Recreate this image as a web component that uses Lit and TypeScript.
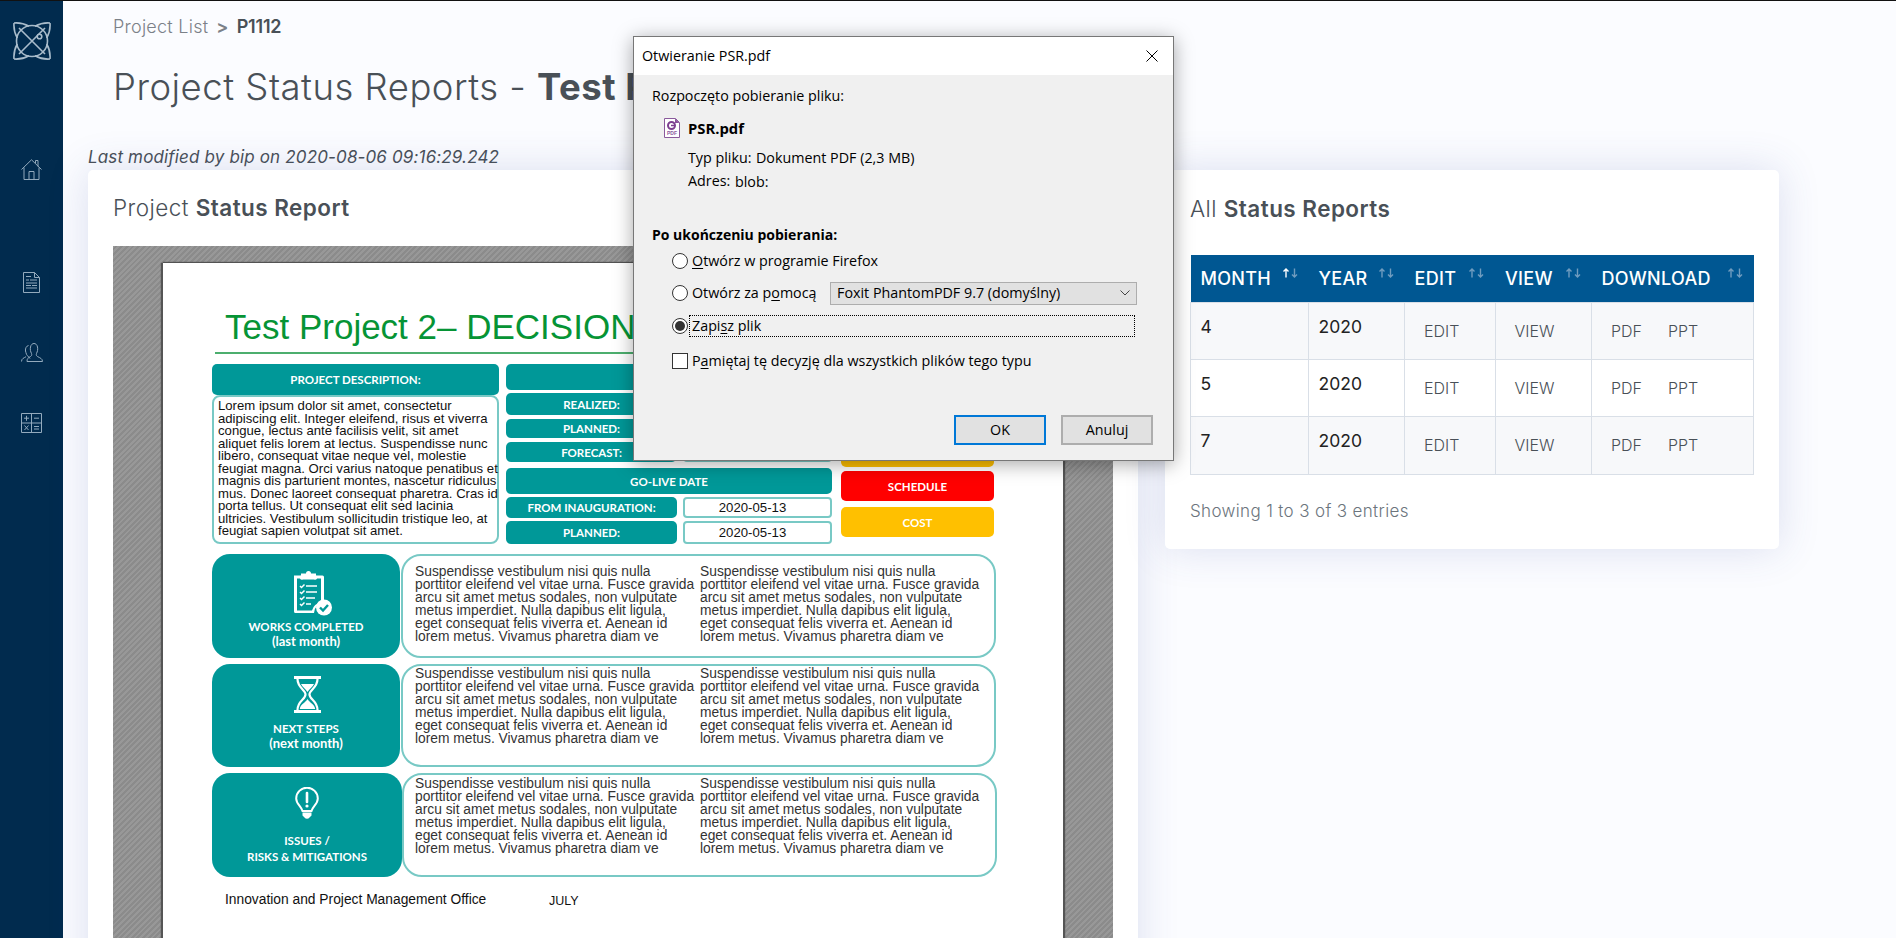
import { LitElement, html, css, svg } from "lit";
import { customElement } from "lit/decorators.js";

const LOREM = [
  "Lorem ipsum dolor sit amet, consectetur",
  "adipiscing elit. Integer eleifend, risus et viverra",
  "congue, lectus ante facilisis velit, sit amet",
  "aliquet felis lorem at lectus. Suspendisse nunc",
  "libero, consequat vitae neque vel, molestie",
  "feugiat magna. Orci varius natoque penatibus et",
  "magnis dis parturient montes, nascetur ridiculus",
  "mus. Donec laoreet consequat pharetra. Cras id",
  "porta tellus. Ut consequat elit sed lacinia",
  "ultricies. Vestibulum sollicitudin tristique leo, at",
  "feugiat sapien volutpat sit amet.",
];
const SUSP = [
  "Suspendisse vestibulum nisi quis nulla",
  "porttitor eleifend vel vitae urna. Fusce gravida",
  "arcu sit amet metus sodales, non vulputate",
  "metus imperdiet. Nulla dapibus elit ligula,",
  "eget consequat felis viverra et. Aenean id",
  "lorem metus. Vivamus pharetra diam ve",
];

const clipboard = svg`<svg class="ic-clip" viewBox="0 0 39 47" fill="none">
  <path d="M1 6.500h28.500a1.500 1.500 0 0 1 1.500 1.500v26a10 10 0 0 0-10 10H2.500A1.500 1.500 0 0 1 1 42.500z" fill="#fff"/>
  <path d="M4 9.500h24v24a11 11 0 0 0-9 8H4z" fill="#009898"/>
  <path d="M8 6.500v-2h5a2.500 2.500 0 0 1 5 0h5v2a2 2 0 0 1-2 4h-11a2 2 0 0 1-2-4z" fill="#fff"/>
  <g stroke="#fff" stroke-width="1.500">
    <path d="M7 17l1.500 1.500 3-3M7 23l1.500 1.500 3-3M7 29l1.500 1.500 3-3M7 35l1.500 1.500 3-3" />
    <path d="M13 17h11M13 23h11M13 29h9M13 35h5" stroke-width="1.700"/>
  </g>
  <circle cx="31" cy="38.500" r="8" fill="#fff"/>
  <path d="M27 38.500l3 3 5-5.500" stroke="#009898" stroke-width="2.400"/>
</svg>`;

const hourglass = svg`<svg class="ic-hour" viewBox="0 0 27 37" fill="none">
  <path d="M0 0h27v3H0zM0 34h27v3H0z" fill="#fff"/>
  <path d="M3.500 3c0 9 8 10.500 8 15.500S3.500 25 3.500 34M23.500 3c0 9-8 10.500-8 15.500s8 6.500 8 15.500" stroke="#fff" stroke-width="2.200"/>
  <path d="M7 8h13c-1 3-5 5-6.500 8C12 13 8 11 7 8zM5.800 33c.6-5 6-6.500 7.700-10 1.700 3.500 7 5 7.700 10z" fill="#fff"/>
</svg>`;

const bulb = svg`<svg class="ic-bulb" viewBox="0 0 24 33" fill="none">
  <path d="M7.500 24C6 19 1.200 17 1.200 11.500a10.800 10.800 0 0 1 21.600 0C22.800 17 18 19 16.500 24z" stroke="#fff" stroke-width="2"/>
  <path d="M7.500 25.500h9v3l-2 2a3 3 0 0 1-5 0l-2-2z" fill="#fff"/>
  <path d="M12 6v9" stroke="#fff" stroke-width="2.600" stroke-linecap="round"/>
  <circle cx="12" cy="19" r="1.600" fill="#fff"/>
</svg>`;

const logo = svg`<svg class="logo" viewBox="0 0 38 38" fill="none" stroke="#a9bccb" stroke-width="1.600">
  <circle cx="19" cy="19" r="15.500"/>
  <path d="M6 6l26 26M32 6L6 32"/>
  <path d="M1 1c6-.5 11 1 15 3.300M1 1c-.5 6 1 11 3.300 15"/>
  <path d="M37 1c-6-.5-11 1-15 3.300M37 1c.5 6-1 11-3.300 15"/>
  <path d="M1 37c6 .5 11-1 15-3.300M1 37c-.5-6 1-11 3.300-15"/>
  <path d="M37 37c-6 .5-11-1-15-3.300M37 37c.5-6-1-11-3.300-15"/>
  <circle cx="26.500" cy="14.500" r="2.300" fill="#012b4e"/>
</svg>`;

const home = svg`<svg class="nav h21" viewBox="0 0 21 21" fill="none"><path d="M.5 10.500L10.500.8l10 9.700M3 8.500v12h15v-12M8 20.500v-8h5v8M14.500 4V1.500h2.500v6" /></svg>`;
const doc = svg`<svg class="nav w17" viewBox="0 0 17 21" fill="none"><path d="M.5.500h11l5 5v15H.5zM11.500.500v5h5M3 4.500h5M3 8h3M7 8h7M3 11h11M3 13.500h5M9 13.500h5M3 16h11"/></svg>`;
const users = svg`<svg class="nav h19" viewBox="0 0 22 19" fill="none"><path d="M9 15.500c-.8-2-3-2.200-3.500-4.200C5 10 4.800 9 4.500 8c-.3-3 1-5 3-5.500M.5 18.500c0-3 2.500-3.500 4.500-4.800M6 18.500h15.500c0-3-2.500-3.500-5-5-1.200-.8-1.500-1.500-1-3 1-2 1.500-4 1-6.500C16 1.500 14.500.5 13 .5S10 1.500 9.500 4c-.5 2.500 0 4.500 1 6.500.5 1.500.2 2.200-1 3-2.500 1.500-3.500 2-3.500 5z"/></svg>`;
const calc = svg`<svg class="nav h20" viewBox="0 0 21 20" fill="none"><path d="M.5.500h20v19H.5zM10.500.500v19M.5 10h20M3 5.200h5M5.500 2.800v5M13 5.200h5M3.500 12.500l4 4.500M7.500 12.500l-4 4.500M13 13.500h5M13 16h5"/></svg>`;

const fileIcon = svg`<svg class="fileic" viewBox="0 0 16 20" fill="none">
  <path d="M.5.500h11l4 4v15H.5z" fill="#fff" stroke="#8a5a9c"/>
  <path d="M11 .500l4.500 4.500H11z" fill="#8a4f9b"/>
  <circle cx="7.500" cy="7.500" r="3.500" stroke="#7d3f90" stroke-width="2"/>
  <path d="M7 7.500h4" stroke="#7d3f90" stroke-width="1.500"/>
  <text x="3" y="17" font-size="5" font-family="Liberation Sans" fill="#8a5a9c">PDF</text>
</svg>`;

const arrows = (active = false) => svg`<svg class="sort" viewBox="0 0 17 10" fill="none" stroke-width="1.400">
  <path d="M4 9.500V1M1.500 3.500L4 1l2.500 2.500" stroke=${active ? "#ffffff" : "#6f9cbf"}/>
  <path d="M12.500 .500V9M10 6.500L12.500 9 15 6.500" stroke="#6f9cbf"/>
</svg>`;

@customElement("app-root")
export class AppRoot extends LitElement {
  static styles = css`
    :host {
      display: flex;
      height: 938px;
      overflow: hidden;
      position: relative;
      box-sizing: border-box;
      border-top: 1px solid #111;
      background: #fbfcff;
      font-family: Inter, "Liberation Sans", sans-serif;
      color: #495057;
    }
    * { box-sizing: border-box; }

    .side {
      width: 63px;
      flex: none;
      background: #012b4e;
      display: flex;
      flex-direction: column;
      align-items: center;
      padding-top: 21px;
    }
    .logo { width: 38px; height: 38px; }
    .nav { stroke: #93aabd; stroke-width: 1; display: block; }
    .h21 { width: 21px; height: 21px; margin-top: 99px; }
    .w17 { width: 17px; height: 21px; margin-top: 92px; }
    .h19 { width: 22px; height: 19px; margin-top: 50px; }
    .h20 { width: 21px; height: 20px; margin-top: 51px; }

    .main { flex: 1; min-width: 0; padding: 14px 0 0 25px; }
    .crumbs {
      margin-left: 25px;
      line-height: 24px;
      font-size: 18px;
      font-weight: 300;
      color: #7b8188;
      display: flex;
      gap: 8px;
      letter-spacing: 0.25px;
    }
    .crumbs b { font-weight: 600; color: #495057; letter-spacing: -0.2px; }
    .crumbs i { font-style: normal; font-weight: 600; }
    h1 {
      margin: 26px 0 0 25px;
      font-size: 36.500px;
      line-height: 44px;
      font-weight: 300;
      letter-spacing: 0.5px;
      white-space: nowrap;
      color: #495057;
    }
    h1 b { font-weight: 700; }
    .mod {
      margin-top: 38px;
      font-size: 17px;
      line-height: 20px;
      font-style: italic;
      font-weight: 400;
      letter-spacing: 0.15px;
      color: #495057;
    }
    .cols { display: grid; grid-template-columns: 1050px 614px; gap: 27px; margin-top: 3px; align-items: start; }
    .card {
      background: #fff;
      border-radius: 5px;
      box-shadow: 0 0 40px rgba(62, 80, 160, 0.17);
      padding: 0 25px;
    }
    .c1 { padding-top: 24px; height: 1100px; }
    .c2 { padding-top: 25px; padding-bottom: 26px; }
    h2 {
      margin: 0;
      font-size: 22.500px;
      line-height: 28px;
      font-weight: 300;
      letter-spacing: 0.45px;
      color: #495057;
    }
    h2 b { font-weight: 600; }

    .viewer {
      margin-top: 24px;
      height: 900px;
      padding: 17px 50px 0;
      background: repeating-linear-gradient(-45deg, #8b8b8b 0 2px, #989898 2px 4px);
    }
    .page {
      height: 860px;
      background: #fff;
      box-shadow: -2px 0 1px #555, 2px 0 1px #555, 0 -1px 1px #555;
      padding: 42px 0 0 49px;
      font-family: "Liberation Sans", Arial, sans-serif;
      color: #222;
    }
    .ptitle {
      margin-left: 13px;
      font-size: 35px;
      line-height: 44px;
      color: #069435;
      white-space: nowrap;
    }
    .prule { margin: 3px 0 10px 3px; height: 2px; width: 780px; background: #4cae6e; }
    .top { display: grid; grid-template-columns: 287px 326px 153px; column-gap: 7px; }
    .top > :last-child { margin-left: 2px; }
    .lab {
      background: #009898;
      color: #fff;
      border-radius: 5px;
      font-family: Lato, "Open Sans", sans-serif;
      font-weight: 700;
      font-size: 11.500px;
      display: flex;
      align-items: center;
      justify-content: center;
      white-space: nowrap;
    }
    .l-desc { height: 31px; }
    .dbox {
      height: 149px;
      border: 2px solid #78c9c5;
      border-radius: 8px;
      padding: 3px 0 0 4px;
      font-size: 13.150px;
      line-height: 12.500px;
      color: #111;
      white-space: nowrap;
    }
    .mid { display: flex; flex-direction: column; }
    .pair { display: grid; grid-template-columns: 171px 149px; column-gap: 6px; }
    .val {
      border: 2px solid #78c9c5;
      border-radius: 4px;
      background: #fff;
      font-size: 13.200px;
      padding-right: 10px;
      color: #111;
      display: flex;
      align-items: center;
      justify-content: center;
    }
    .m1 { height: 26px; }
    .m2 { height: 22px; margin-top: 3px; }
    .m3 { height: 19px; margin-top: 4px; }
    .m4 { height: 20px; margin-top: 4px; }
    .m5 { height: 26px; margin-top: 6px; }
    .m6 { height: 21px; margin-top: 3px; }
    .m7 { height: 23px; margin-top: 3px; }
    .rag { display: flex; flex-direction: column; padding-top: 73px; }
    .rag .lab { width: 153px; height: 30px; }
    .y { background: #ffc000; }
    .r { background: #ff0000; margin-top: 4px; }
    .y2 { background: #ffc000; margin-top: 6px; }

    .rows { margin-top: 10px; display: flex; flex-direction: column; gap: 6px; width: 785px; }
    .row { display: grid; grid-template-columns: 188px 595px; column-gap: 1px; height: 104px; }
    .row.b { height: 103px; }
    .row.c { grid-template-columns: 190px 595px; column-gap: 0; }
    .tile {
      background: #009898;
      color: #fff;
      border-radius: 18px;
      display: flex;
      flex-direction: column;
      align-items: center;
      font-family: Lato, "Open Sans", sans-serif;
      font-weight: 700;
      font-size: 11.500px;
      line-height: 14px;
      text-align: center;
    }
    .tile svg { display: block; }
    .sub { font-size: 13px; }
    .ic-clip { width: 39px; height: 47px; margin: 15px 0 4px 13px; }
    .ic-hour { width: 27px; height: 37px; margin: 12px 0 9px 2px; }
    .ic-bulb { width: 24px; height: 33px; margin: 14px 0 14px; }
    .row.c .tile span + span { margin-top: 2px; }
    .txtbox {
      border: 2px solid #78c9c5;
      border-radius: 20px;
      display: grid;
      grid-template-columns: 285px 285px;
      padding-left: 12px;
      font-size: 13.800px;
      line-height: 13px;
      color: #333;
      white-space: nowrap;
    }
    .row.a .txtbox { padding-top: 9px; }
    .row.b .txtbox { padding-top: 1px; }
    .row.c .txtbox { padding-top: 2px; }
    .row.c .txtbox { padding-left: 11px; }
    .foot {
      margin: 15px 0 0 13px;
      display: flex;
      align-items: flex-end;
      color: #111;
    }
    .foot span:first-child { font-size: 13.800px; width: 324px; line-height: 16px; }
    .foot span:last-child { font-size: 12.500px; line-height: 13px; }

    table { border-collapse: collapse; table-layout: fixed; width: 563px; margin-top: 32px; }
    th {
      background: #005792;
      color: #fff;
      height: 47px;
      padding: 0 10px 0 10px;
      font-size: 18px;
      font-weight: 500;
      letter-spacing: 0.3px;
      text-align: left;
    }
    th div { display: flex; justify-content: space-between; align-items: center; }
    .sort { width: 17px; height: 10px; flex: none; margin-top: -11px; }
    td {
      border: 1px solid #d9dfe7;
      vertical-align: top;
      padding: 13.500px 0 0 9.500px;
      font-size: 17.500px;
      line-height: 22px;
      color: #222;
      font-weight: 400;
    }
    tr:nth-child(odd) td { background: #f7f8fa; }
    tr.r57 { height: 57px; }
    tr.r58 { height: 58px; }
    td.lk { padding: 17.500px 0 0 19px; font-size: 16px; font-weight: 300; color: #495057; }
    td.lk span { display: inline-block; min-width: 57px; }
    .show { margin-top: 24px; line-height: 24px; font-size: 17px; letter-spacing: 0.35px; font-weight: 300; color: #6c757d; }

    .dlg {
      position: absolute;
      left: 633px;
      top: 35px;
      width: 541px;
      height: 425px;
      background: #f0f0f0;
      border: 1px solid #777;
      box-shadow: 0 3px 18px rgba(0, 0, 0, 0.35);
      font-family: "Open Sans", "Noto Sans", sans-serif;
      font-size: 14.300px;
      color: #000;
      line-height: 20px;
    }
    .tb {
      height: 38px;
      background: #fff;
      display: flex;
      align-items: center;
      justify-content: space-between;
      padding: 0 15px 0 8px;
    }
    .tb svg { width: 12px; height: 12px; }
    .bd { padding: 11px 20px 0 18px; }
    .file { margin: 12px 0 0 12px; display: flex; gap: 8px; font-weight: 700; font-size: 14.800px; }
    .fileic { width: 16px; height: 20px; }
    .meta { margin-left: 36px; display: flex; }
    .meta1 { margin-top: 10px; }
    .meta2 { margin-top: 3px; }
    .meta1 span:first-child { width: 68px; }
    .meta2 span:first-child { width: 47px; }
    .meta2 span:last-child { padding-top: 1px; }
    .after { margin-top: 33px; font-weight: 700; font-size: 14px; }
    .opt { margin-left: 20px; height: 22px; display: flex; align-items: center; gap: 4px; }
    .o1 { margin-top: 5px; }
    .o2 { margin-top: 10px; }
    .o3 { margin-top: 11px; }
    .o4 { margin-top: 13px; }
    .radio {
      width: 16px;
      height: 16px;
      border-radius: 50%;
      border: 1px solid #333;
      background: #fff;
      flex: none;
      display: flex;
      align-items: center;
      justify-content: center;
    }
    .radio.on::after { content: ""; width: 10px; height: 10px; border-radius: 50%; background: #333; }
    .chk { width: 16px; height: 16px; border: 1px solid #333; background: #fff; flex: none; }
    .o2 .lbl { width: 134px; white-space: nowrap; }
    .sel {
      width: 307px;
      height: 23px;
      background: #e1e1e1;
      border: 1px solid #adadad;
      display: flex;
      align-items: center;
      justify-content: space-between;
      padding: 0 6px 0 6px;
    }
    .sel svg { width: 10px; height: 6px; }
    .focus { flex: 1; margin-left: -3px; height: 22px; border: 1px dotted #000; padding-left: 2px; margin-right: 18px; line-height: 20px; }
    .btns { margin-top: 43px; display: flex; justify-content: flex-end; gap: 15px; }
    .btn {
      width: 92px;
      height: 30px;
      background: #e1e1e1;
      border: 2px solid #adadad;
      display: flex;
      align-items: center;
      justify-content: center;
    }
    .btn.def { border-color: #0078d7; }
    u { text-underline-offset: 2px; text-decoration-thickness: 1px; }
  `;

  private txtCol() {
    return html`<div>${SUSP.map((l) => html`<div>${l}</div>`)}</div>`;
  }

  render() {
    const rows = [
      { cls: "a", icon: clipboard, l: ["WORKS COMPLETED", "(last month)"], sub: "sub" },
      { cls: "b", icon: hourglass, l: ["NEXT STEPS", "(next month)"], sub: "sub" },
      { cls: "c", icon: bulb, l: ["ISSUES /", "RISKS & MITIGATIONS"], sub: "" },
    ];
    const tbl = [
      ["4", "r57"],
      ["5", "r57"],
      ["7", "r58"],
    ];
    return html`
      <aside class="side">${logo}${home}${doc}${users}${calc}</aside>
      <div class="main">
        <div class="crumbs"><span>Project List</span><i>&gt;</i><b>P1112</b></div>
        <h1>Project Status Reports - <b>Test Project 2</b></h1>
        <div class="mod">Last modified by bip on 2020-08-06 09:16:29.242</div>
        <div class="cols">
          <section class="card c1">
            <h2>Project <b>Status Report</b></h2>
            <div class="viewer">
              <div class="page">
                <div class="ptitle">Test Project 2– DECISION</div>
                <div class="prule"></div>
                <div class="top">
                  <div>
                    <div class="lab l-desc">PROJECT DESCRIPTION:</div>
                    <div class="dbox">${LOREM.map((l) => html`<div>${l}</div>`)}</div>
                  </div>
                  <div class="mid">
                    <div class="lab m1"></div>
                    <div class="pair m2"><div class="lab">REALIZED:</div><div class="val"></div></div>
                    <div class="pair m3"><div class="lab">PLANNED:</div><div class="val"></div></div>
                    <div class="pair m4"><div class="lab">FORECAST:</div><div class="val"></div></div>
                    <div class="lab m5">GO-LIVE DATE</div>
                    <div class="pair m6"><div class="lab">FROM INAUGURATION:</div><div class="val">2020-05-13</div></div>
                    <div class="pair m7"><div class="lab">PLANNED:</div><div class="val">2020-05-13</div></div>
                  </div>
                  <div class="rag">
                    <div class="lab y"></div>
                    <div class="lab r">SCHEDULE</div>
                    <div class="lab y2">COST</div>
                  </div>
                </div>
                <div class="rows">
                  ${rows.map(
                    (r) => html`<div class="row ${r.cls}">
                      <div class="tile">${r.icon}<span>${r.l[0]}</span><span class=${r.sub}>${r.l[1]}</span></div>
                      <div class="txtbox">${this.txtCol()}${this.txtCol()}</div>
                    </div>`
                  )}
                </div>
                <div class="foot"><span>Innovation and Project Management Office</span><span>JULY</span></div>
              </div>
            </div>
          </section>
          <section class="card c2">
            <h2>All <b>Status Reports</b></h2>
            <table>
              <colgroup>
                <col style="width:118px" /><col style="width:96px" /><col style="width:90.500px" /><col style="width:96.500px" /><col style="width:162px" />
              </colgroup>
              <thead>
                <tr>
                  <th><div>MONTH${arrows(true)}</div></th>
                  <th><div>YEAR${arrows()}</div></th>
                  <th><div>EDIT${arrows()}</div></th>
                  <th><div>VIEW${arrows()}</div></th>
                  <th><div>DOWNLOAD${arrows()}</div></th>
                </tr>
              </thead>
              <tbody>
                ${tbl.map(
                  ([m, c]) => html`<tr class=${c}>
                    <td>${m}</td><td>2020</td>
                    <td class="lk">EDIT</td><td class="lk">VIEW</td>
                    <td class="lk"><span>PDF</span>PPT</td>
                  </tr>`
                )}
              </tbody>
            </table>
            <div class="show">Showing 1 to 3 of 3 entries</div>
          </section>
        </div>
      </div>

      <div class="dlg">
        <div class="tb">
          <span>Otwieranie PSR.pdf</span>
          <svg viewBox="0 0 12 12" fill="none" stroke="#000"><path d="M.5.500l11 11M11.500.500l-11 11"/></svg>
        </div>
        <div class="bd">
          <div>Rozpoczęto pobieranie pliku:</div>
          <div class="file">${fileIcon}<span>PSR.pdf</span></div>
          <div class="meta meta1"><span>Typ pliku:</span><span>Dokument PDF (2,3 MB)</span></div>
          <div class="meta meta2"><span>Adres:</span><span>blob:</span></div>
          <div class="after">Po ukończeniu pobierania:</div>
          <div class="opt o1"><div class="radio"></div><span class="lbl"><u>O</u>twórz w programie Firefox</span></div>
          <div class="opt o2">
            <div class="radio"></div><span class="lbl">Otwórz za p<u>o</u>mocą</span>
            <div class="sel"><span>Foxit PhantomPDF 9.7 (domyślny)</span>
              <svg viewBox="0 0 10 6" fill="none" stroke="#444"><path d="M.5.500L5 5 9.500.500"/></svg>
            </div>
          </div>
          <div class="opt o3"><div class="radio on"></div><div class="focus">Zapi<u>s</u>z plik</div></div>
          <div class="opt o4"><div class="chk"></div><span>P<u>a</u>miętaj tę decyzję dla wszystkich plików tego typu</span></div>
          <div class="btns"><div class="btn def">OK</div><div class="btn">Anuluj</div></div>
        </div>
      </div>
    `;
  }
}
